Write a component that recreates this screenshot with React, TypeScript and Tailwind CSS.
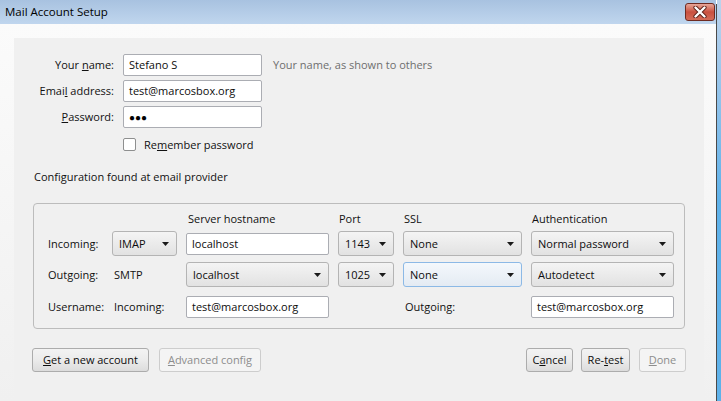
import React from "react";

const cols = "grid grid-cols-[55px_65px_143px_56px_119px_143px] gap-x-[9px] items-center";

function TextBox({ value, className = "" }: { value: React.ReactNode; className?: string }) {
  return (
    <div
      className={`h-[22px] bg-white border border-[#abadb3] rounded-[2px] flex items-center pl-[5px] text-[#0d0d0d] ${className}`}
    >
      {value}
    </div>
  );
}

function Arrow() {
  return (
    <svg width="7" height="4" viewBox="0 0 7 4" className="shrink-0">
      <path d="M0 0h7L3.5 4z" fill="#1a1a1a" />
    </svg>
  );
}

function Select({ value, focused = false }: { value: string; focused?: boolean }) {
  return (
    <div
      className={`h-[25px] rounded-[3px] border flex items-center justify-between pl-[6px] pr-[7px] text-[#0d0d0d] bg-gradient-to-b ${
        focused
          ? "border-[#8cb9e6] from-[#f4f8fc] to-[#e4ebf3]"
          : "border-[#b4b4b4] from-[#f4f4f4] to-[#e2e2e2]"
      }`}
    >
      <span>{value}</span>
      <Arrow />
    </div>
  );
}

function Button({
  children,
  width,
  disabled = false,
}: {
  children: React.ReactNode;
  width: string;
  disabled?: boolean;
}) {
  return (
    <button
      className={`${width} h-[24px] rounded-[3px] border flex items-center justify-center ${
        disabled
          ? "border-[#cdcdcd] bg-[#f4f4f4] text-[#8d8d8d]"
          : "border-[#acacac] bg-gradient-to-b from-[#f3f3f3] via-[#ebebeb] to-[#dcdcdc] text-[#0d0d0d]"
      }`}
    >
      {children}
    </button>
  );
}

export default function App() {
  return (
    <div className="w-[721px] h-[401px] overflow-hidden flex font-['Open_Sans',sans-serif] text-[11px] leading-[16px] text-[#111]">
      <div className="flex-1 flex flex-col">
        {/* Title bar */}
        <div className="h-[24px] shrink-0 flex items-center justify-between pl-[5px] pr-[1px] bg-gradient-to-b from-[#a8c2e0] to-[#c0d6ee]">
          <span className="text-[11.5px] text-black">Mail Account Setup</span>
          <div className="w-[30px] h-[18px] rounded-[3px] border border-[#6e2b22] bg-gradient-to-b from-[#e6a699] via-[#c9503f] to-[#d46c58] flex items-center justify-center">
            <svg width="14" height="12" viewBox="0 0 14 12">
              <path d="M2.5 1.5l9 9M11.5 1.5l-9 9" stroke="#5a2018" strokeWidth="4.2" strokeLinecap="round" />
              <path d="M2.5 1.5l9 9M11.5 1.5l-9 9" stroke="#ffffff" strokeWidth="2.4" strokeLinecap="round" />
            </svg>
          </div>
        </div>

        {/* Window body */}
        <div className="flex-1 flex flex-col bg-gradient-to-b from-[#fbfbfb] to-[#f0f0f0] pl-[14px] pr-[12px] pt-[14px]">
          <div className="flex-1 bg-[#f0f0f0] flex flex-col">
            {/* Identity fields */}
            <div className="grid grid-cols-[100px_139px_auto] gap-x-[9px] gap-y-[4px] items-center pt-[16px]">
              <span className="text-right">
                Your <u>n</u>ame:
              </span>
              <TextBox value="Stefano S" />
              <span className="ml-[2px] text-[#6e6e6e]">Your name, as shown to others</span>

              <span className="text-right">
                Emai<u>l</u> address:
              </span>
              <TextBox value="test@marcosbox.org" />
              <span />

              <span className="text-right">
                <u>P</u>assword:
              </span>
              <TextBox value={<span className="text-[10px] tracking-[0px] text-black">●●●</span>} />
              <span />
            </div>

            <div className="ml-[109px] mt-[10px] h-[13px] flex items-center gap-[8px]">
              <div className="w-[13px] h-[13px] bg-white border border-[#8e8f8f] rounded-[2px]" />
              <span>
                Re<u>m</u>ember password
              </span>
            </div>

            <div className="ml-[20px] mt-[18px]">Configuration found at email provider</div>

            {/* Server settings group */}
            <div className="ml-[19px] mt-[18px] w-[652px] h-[126px] border border-[#bcbcbc] rounded-[4px] pl-[14px] pt-[7px]">
              <div className={`${cols} h-[16px]`}>
                <span />
                <span />
                <span className="pl-[2px]">Server hostname</span>
                <span className="pl-[1px]">Port</span>
                <span className="pl-[1px]">SSL</span>
                <span className="pl-[1px]">Authentication</span>
              </div>

              <div className={`${cols} mt-[4px] h-[25px]`}>
                <span>Incoming:</span>
                <Select value="IMAP" />
                <TextBox value="localhost" />
                <Select value="1143" />
                <Select value="None" />
                <Select value="Normal password" />
              </div>

              <div className={`${cols} mt-[6px] h-[25px]`}>
                <span>Outgoing:</span>
                <span className="pl-[2px]">SMTP</span>
                <Select value="localhost" />
                <Select value="1025" />
                <Select value="None" focused />
                <Select value="Autodetect" />
              </div>

              <div className={`${cols} mt-[9px] h-[22px]`}>
                <span>Username:</span>
                <span className="pl-[2px]">Incoming:</span>
                <TextBox value="test@marcosbox.org" />
                <span />
                <span className="pl-[2px]">Outgoing:</span>
                <TextBox value="test@marcosbox.org" />
              </div>
            </div>

            {/* Buttons */}
            <div className="mt-[19px] ml-[18px] mr-[18px] flex items-center">
              <Button width="w-[117px]">
                <span>
                  <u>G</u>et a new account
                </span>
              </Button>
              <div className="ml-[10px]">
                <Button width="w-[102px]" disabled>
                  <span>
                    <u>A</u>dvanced config
                  </span>
                </Button>
              </div>
              <div className="flex-1" />
              <Button width="w-[47px]">
                <span>
                  C<u>a</u>ncel
                </span>
              </Button>
              <div className="ml-[8px]">
                <Button width="w-[49px]">
                  <span>
                    Re-<u>t</u>est
                  </span>
                </Button>
              </div>
              <div className="ml-[9px]">
                <Button width="w-[47px]" disabled>
                  <span>
                    <u>D</u>one
                  </span>
                </Button>
              </div>
            </div>
          </div>
        </div>
      </div>

      {/* Right window frame */}
      <div className="w-[5px] shrink-0 flex">
        <div className="w-[1px] bg-[#4a4a4a] mt-[4px]" />
        <div className="flex-1 bg-gradient-to-b from-[#bcd3ec] via-[#5fb2ea] to-[#5fb2ea]" />
      </div>
    </div>
  );
}
